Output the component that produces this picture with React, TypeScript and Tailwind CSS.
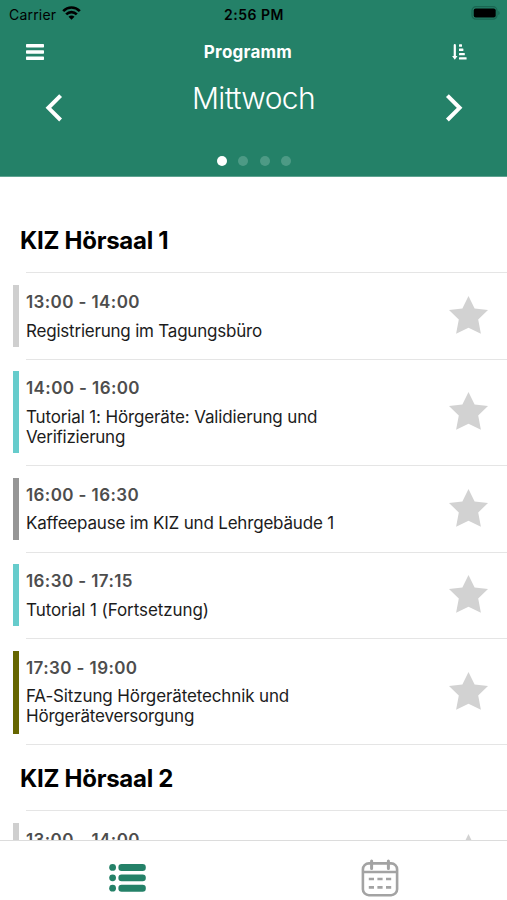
interface Session {
    time: string;
    lines: string[];
    color: string;
    tracking: string[];
}

interface Hall {
    name: string;
    sessions: Session[];
}

const halls: Hall[] = [
    {
        name: "KIZ Hörsaal 1",
        sessions: [
            { time: "13:00 - 14:00", lines: ["Registrierung im Tagungsbüro"], color: "bg-[#cfcfcf]", tracking: ["tracking-[-0.21px]"] },
            { time: "14:00 - 16:00", lines: ["Tutorial 1: Hörgeräte: Validierung und", "Verifizierung"], color: "bg-[#66cccc]", tracking: ["tracking-[-0.14px]", "tracking-[-0.25px]"] },
            { time: "16:00 - 16:30", lines: ["Kaffeepause im KIZ und Lehrgebäude 1"], color: "bg-[#969696]", tracking: ["tracking-[-0.19px]"] },
            { time: "16:30 - 17:15", lines: ["Tutorial 1 (Fortsetzung)"], color: "bg-[#66cccc]", tracking: ["tracking-[-0.07px]"] },
            { time: "17:30 - 19:00", lines: ["FA-Sitzung Hörgerätetechnik und", "Hörgeräteversorgung"], color: "bg-[#666600]", tracking: ["tracking-[-0.13px]", "tracking-[-0.2px]"] },
        ],
    },
    {
        name: "KIZ Hörsaal 2",
        sessions: [
            { time: "13:00 - 14:00", lines: ["Registrierung im Tagungsbüro"], color: "bg-[#cfcfcf]", tracking: ["tracking-[-0.21px]"] },
        ],
    },
];

function StatusBar() {
    return (
        <div className="grid grid-cols-3 items-center h-7 pl-[9px] pr-[6px] text-black">
            <div className="flex items-center gap-[6px]">
                <span className="text-[14px] tracking-[0.2px]">Carrier</span>
                <svg className="-mt-[2px]" width="19" height="14" viewBox="0 0 19 14" fill="none" stroke="#000" strokeWidth="2.7">
                    <path d="M1.2 5.1C6 .3 13 .3 17.8 5.1" />
                    <path d="M4.2 8.4c3-3 7.6-3 10.6 0" />
                    <path d="M9.5 13.8 6.5 10.7c1.7-1.6 4.3-1.6 6 0z" fill="#000" stroke="none" />
                </svg>
            </div>
            <span className="-ml-[2px] text-center text-[14px] font-semibold tracking-[0.5px]">2:56 PM</span>
            <svg className="-mt-px justify-self-end" width="30" height="15" viewBox="0 0 30 15">
                <rect x="1" y=".7" width="25" height="12.5" rx="4" fill="none" stroke="#1a6652" strokeWidth="1.2" />
                <rect x="2.7" y="2.4" width="22" height="9" rx="2" fill="#000" />
                <path d="M27.3 4.9c1.7.5 1.7 3.6 0 4.1z" fill="#1a6652" />
            </svg>
        </div>
    );
}

function Header() {
    return (
        <header className="h-[177px] shrink-0 bg-[#248168] text-white border-b border-[#5fa391]">
            <StatusBar />
            <div className="flex items-center justify-between h-12 pl-[26px] pr-[40px]">
                <svg width="18" height="16" viewBox="0 0 18 16" fill="#fff">
                    <rect width="18" height="3.4" rx=".7" />
                    <rect y="6.3" width="18" height="3.4" rx=".7" />
                    <rect y="12.6" width="18" height="3.4" rx=".7" />
                </svg>
                <h1 className="pt-[2px] text-[17px] font-bold tracking-[0.25px]">Programm</h1>
                <svg width="15" height="16" viewBox="0 0 15 16" fill="#fff">
                    <path d="M1.7 1.2a1.1 1.1 0 0 1 2.2 0v10.9h1.6L2.8 15.8.1 12.1h1.6z" />
                    <rect x="7" y=".3" width="3" height="2.4" rx=".5" />
                    <rect x="7" y="4.6" width="4.4" height="2.4" rx=".5" />
                    <rect x="7" y="8.9" width="5.8" height="2.4" rx=".5" />
                    <rect x="7" y="13.2" width="7.6" height="2.4" rx=".5" />
                </svg>
            </div>
            <div className="flex justify-between pl-[45px] pr-[44px] h-[76px]">
                <svg className="mt-[17px]" width="18" height="29" viewBox="0 0 18 29" fill="none" stroke="#fff" strokeWidth="4">
                    <path d="M15.6 2.6 3.4 14.8l12.2 12.2" />
                </svg>
                <h2 className="mt-[3px] -ml-px leading-[38px] text-[30px] font-light tracking-[-0.6px]">Mittwoch</h2>
                <svg className="mt-[17px]" width="18" height="29" viewBox="0 0 18 29" fill="none" stroke="#fff" strokeWidth="4">
                    <path d="M2.4 2.6 14.6 14.8 2.4 27" />
                </svg>
            </div>
            <div className="flex justify-center gap-[11.5px] mt-[4px] pl-px">
                <span className="size-[10px] rounded-full bg-white" />
                <span className="size-[10px] rounded-full bg-[#4d9a85]" />
                <span className="size-[10px] rounded-full bg-[#4d9a85]" />
                <span className="size-[10px] rounded-full bg-[#4d9a85]" />
            </div>
        </header>
    );
}

function Star() {
    return (
        <svg className="-mt-[2px]" width="40" height="38" viewBox="0 0 40 38" fill="#d2d2d2">
            <path d="M19.5 0l6.1 12.5 13.4 1.4-9.8 9.6 2.7 14.2-12.4-5.9-12.4 5.9 2.7-14.2L0 13.9l13.4-1.4z" />
        </svg>
    );
}

function SessionRow({ session }: { session: Session }) {
    return (
        <li className="group flex pl-[13px]">
            <div className={`w-[6px] mt-[12.7px] mb-[11.8px] shrink-0 ${session.color}`} />
            <div className="ml-[7px] flex flex-1 items-center border-t border-[#e5e5e5] group-last:border-b pr-[18px]">
                <div className="flex-1 pt-[17.6px] pb-[17.95px]">
                    <p className="text-[17px] leading-[22px] font-semibold text-[#4d4d4d] tracking-[0.4px]">{session.time}</p>
                    <p className="mt-[7.6px] text-[17px] leading-[20.2px] text-[#1c1c1c]">
                        {session.lines.map((line, i) => (
                            <span key={i} className={`block whitespace-nowrap ${session.tracking[i]}`}>{line}</span>
                        ))}
                    </p>
                </div>
                <Star />
            </div>
        </li>
    );
}

function TabBar() {
    return (
        <nav className="grid grid-cols-2 h-[60px] shrink-0 border-t border-[#dcdcdc] bg-white">
            <div className="flex items-center justify-center pt-[15px] pl-px">
                <svg width="37" height="44" viewBox="0 0 37 44" fill="#248168">
                    {[8, 18.4, 28.8].map((y) => (
                        <g key={y}>
                            <circle cx="3.6" cy={y + 3.4} r="3.4" />
                            <rect x="9.4" y={y} width="27.4" height="6.9" rx="3.2" />
                        </g>
                    ))}
                </svg>
            </div>
            <div className="flex items-center justify-center pt-[15px]">
                <svg width="38" height="44" viewBox="0 0 38 44" fill="none" stroke="#a3a3a3" strokeWidth="2.6">
                    <rect x="1.9" y="7.4" width="34.2" height="31.8" rx="6" />
                    <path d="M1.9 16h34.2" />
                    <path d="M10.6 5v7.6M27.4 5v7.6" strokeWidth="3" strokeLinecap="round" />
                    <path d="M7.8 23h5.2M16.4 23h5.2M25 23h5.2M7.8 31.4h5.2M16.4 31.4h5.2M25 31.4h5.2" />
                </svg>
            </div>
        </nav>
    );
}

export default function App() {
    return (
        <div className="flex flex-col w-[507px] h-[900px] overflow-hidden bg-white font-[Inter,sans-serif]">
            <Header />
            <main className="flex-1 min-h-0 overflow-hidden pt-[29.4px]">
                {halls.map((hall) => (
                    <section key={hall.name}>
                        <div className="h-[66px] ml-[20px] pt-[18.5px]">
                            <h3 className="text-[24px] leading-[32px] font-bold text-black tracking-[-0.27px]">{hall.name}</h3>
                        </div>
                        <ul className="-mb-px">
                            {hall.sessions.map((session) => (
                                <SessionRow key={session.time} session={session} />
                            ))}
                        </ul>
                    </section>
                ))}
            </main>
            <TabBar />
        </div>
    );
}
